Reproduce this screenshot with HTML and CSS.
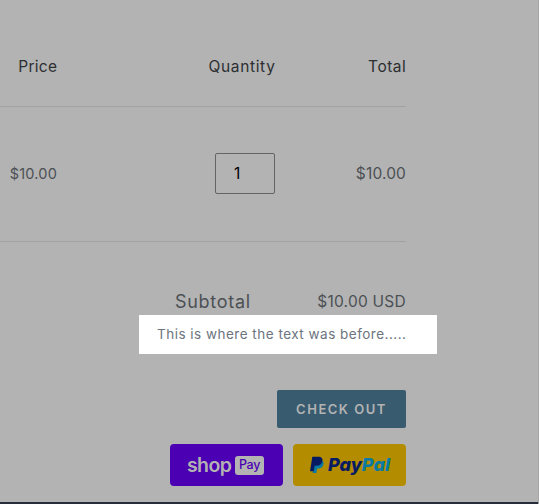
FILE: index.html
```html
<!DOCTYPE html>
<html lang="en">
<head>
<meta charset="utf-8">
<title>Your cart</title>
<link rel="stylesheet" href="styles.css">
</head>
<body>
<main class="cart">
  <div class="row head">
    <span class="h-price">Price</span><span class="h-quantity">Quantity</span><span class="h-total">Total</span>
  </div>
  <div class="row item">
    <span class="price">$10.00</span>
    <span class="quantity"><span>1</span></span>
    <span class="total">$10.00</span>
  </div>
  <div class="subtotal"><span class="label">Subtotal</span><span class="amount">$10.00 USD</span></div>
  <p class="note"><span>This is where the text was before.....</span></p>
  <button class="checkout"><span>CHECK OUT</span></button>
  <div class="wallets">
    <div class="wallet shop-pay"><span class="shop">shop</span><span class="pay"><span>Pay</span></span></div>
    <div class="wallet paypal">
      <svg class="mark" viewBox="0 0 14 18" aria-hidden="true">
        <path fill="#087ba4" d="M5 4h6.2c2 .8 2.8 2.3 2.2 4.5-.6 2.7-2.5 4-5.1 4H7.1L6.3 17H2.6z"/>
        <path fill="#071b62" d="M2.3.7h6.1c3.2 0 4.6 1.8 4 4.5-.7 3.2-2.8 4.6-6 4.6H4.7l-1 5.5H0z"/>
      </svg>
      <span class="wordmark"><span class="navy">Pay</span><span class="blue">Pal</span></span>
    </div>
  </div>
</main>
<footer class="page-end"></footer>
</body>
</html>
```
FILE: styles.css
```css
* { box-sizing: border-box; }
body {
  margin: 0;
  width: 539px;
  height: 504px;
  overflow: hidden;
  display: flex;
  flex-direction: column;
  background: #b3b3b3;
  border-right: 1px solid #a5a5a6;
  font-family: Inter, "Liberation Sans", sans-serif;
  color: #4c5055;
  white-space: nowrap;
}
.cart { height: 502px; display: flex; flex-direction: column; align-items: flex-end; width: 406px; }
.row {
  display: grid;
  grid-template-columns: 57px 218px 131px;
  justify-items: end;
  align-items: center;
  width: 406px;
  border-bottom: 1px solid #a2a2a3;
}
.head { height: 107px; padding-top: 27px; color: #2c2e31; font-size: 15.5px; }
.h-price { letter-spacing: .27px; margin-right: -.27px; }
.h-quantity { letter-spacing: .65px; margin-right: -.5px; }
.h-total { letter-spacing: .5px; margin-right: -.3px; }
.item { height: 135px; padding-bottom: 2px; }
.price { font-size: 14.5px; letter-spacing: .2px; }
.total { font-size: 15.5px; letter-spacing: .15px; }
.quantity {
  width: 60px;
  height: 41px;
  padding-left: 18px;
  border: 1px solid #646466;
  border-radius: 2px;
  display: flex;
  align-items: center;
  color: #000;
  font-size: 15.5px;
}
.subtotal { height: 73px; padding-top: 46px; display: flex; align-items: center; line-height: 22px; }
.label { width: 142px; font-size: 18px; letter-spacing: .7px; }
.amount { width: 89px; padding-top: 1px; display: flex; justify-content: flex-end; font-size: 15.5px; letter-spacing: .25px; }
.note {
  margin: 0 -31px 0 0;
  width: 298px;
  height: 39px;
  padding: 0 0 1px 18px;
  display: flex;
  align-items: center;
  background: #fff;
  color: #6d747e;
  font-size: 13.5px;
  letter-spacing: .49px;
}
.checkout {
  margin-top: 36px;
  width: 129px;
  height: 38px;
  padding: 0;
  border: 0;
  border-radius: 2px;
  background: #385b70;
  color: #b3b3b3;
  font: 600 13px Inter, sans-serif;
  letter-spacing: 1.5px;
}
.wallets { display: flex; gap: 10px; margin-top: 16px; }
.wallet {
  width: 113px;
  height: 42px;
  border-radius: 4px;
  display: flex;
  align-items: center;
}
.shop-pay { background: #4b00b3; padding-left: 17px; gap: 2px; }
.shop { width: 46px; color: #b3b3b3; font: 600 19.5px/20px Inter, sans-serif; letter-spacing: -.6px; padding-bottom: 1px; }
.pay {
  width: 29px;
  height: 19px;
  border-radius: 3px;
  display: flex;
  align-items: center;
  justify-content: center;
  background: #b3b3b3;
  color: #4b00b3;
  font: 500 12.5px/18px Inter, sans-serif;
  letter-spacing: -.3px;
}
.paypal { background: #b38c00; padding-left: 17px; gap: 4px; }
.mark { width: 14px; height: 18px; }
.wordmark { font: italic 800 18px/20px Inter, sans-serif; letter-spacing: 0; }
.navy { color: #071b62; }
.blue { color: #087ba4; }
.page-end { height: 2px; background: #272d38; }
```
